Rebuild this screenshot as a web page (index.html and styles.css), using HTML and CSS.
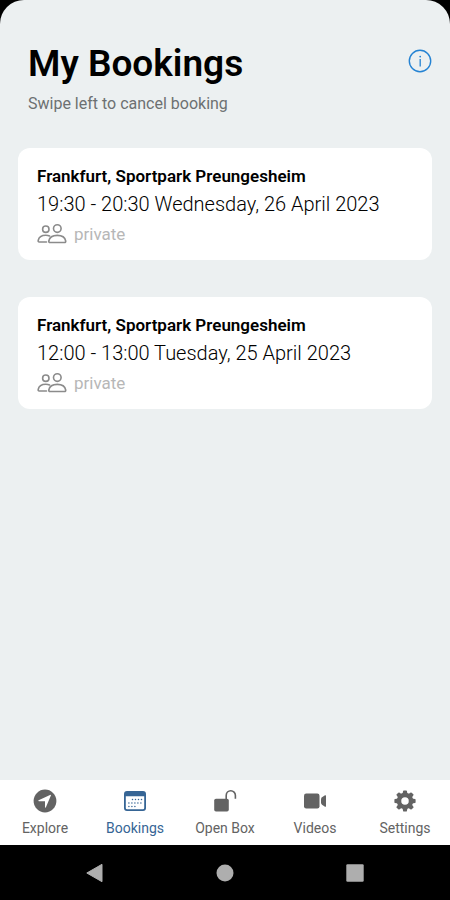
FILE: index.html
```html
<!DOCTYPE html>
<html lang="en">
<head>
<meta charset="utf-8">
<meta name="viewport" content="width=device-width, initial-scale=1">
<title>My Bookings</title>
<link rel="stylesheet" href="styles.css">
</head>
<body>
<svg class="sprite" aria-hidden="true">
  <symbol id="people" viewBox="0 0 30 20">
    <g fill="none" stroke="currentColor" stroke-width="1.6" stroke-linejoin="round" stroke-linecap="round">
      <circle cx="8.8" cy="5.2" r="3.2"/>
      <circle cx="20.3" cy="4.6" r="3.8"/>
      <path d="M9.500 18H2.200Q1 18 1.200 16.500C1.800 13.200 5 11.200 8.800 11.200Q11 11.200 12.600 12"/>
      <path d="M13.200 18.500Q11.500 18.500 11.800 17C12.500 13.300 16 11.400 20.300 11.400S28 13.300 28.700 17Q29 18.500 27.300 18.500Z"/>
    </g>
  </symbol>
</svg>
<div class="app">
  <main class="screen">
    <header class="header">
      <div>
        <h1 class="title">My Bookings</h1>
        <p class="hint">Swipe left to cancel booking</p>
      </div>
      <button class="info" type="button" aria-label="Information">
        <svg width="24" height="24" viewBox="0 0 24 24" fill="none" stroke="currentColor" stroke-width="1.4"><circle cx="12" cy="12" r="10.700"/><path d="M12.200 10v7.500" stroke-width="1.300"/><circle cx="12.200" cy="7.600" r=".9" fill="currentColor" stroke="none"/></svg>
      </button>
    </header>
    <ul class="bookings">
      <li class="card">
        <h2 class="place">Frankfurt, Sportpark Preungesheim</h2>
        <p class="time">19:30 - 20:30 Wednesday, 26 April 2023</p>
        <p class="type"><svg class="people"><use href="#people"/></svg>private</p>
      </li>
      <li class="card">
        <h2 class="place">Frankfurt, Sportpark Preungesheim</h2>
        <p class="time">12:00 - 13:00 Tuesday, 25 April 2023</p>
        <p class="type"><svg class="people"><use href="#people"/></svg>private</p>
      </li>
    </ul>
  </main>
  <nav class="tabs">
    <a class="tab" href="#explore">
      <svg class="icon" viewBox="0 0 24 24"><circle cx="12" cy="12" r="11.400" fill="currentColor"/><path d="M18 6.200 12.800 18.500Q12.300 19 12 18.200V12.300H5.800Q4.800 12 5.600 11.300L17 6Q18 5.500 18 6.200Z" fill="#fff"/></svg>
      Explore
    </a>
    <a class="tab active" href="#bookings" aria-current="page">
      <svg class="icon" viewBox="0 0 24 24"><path fill="currentColor" fill-rule="evenodd" d="M4 2h16a3 3 0 0 1 3 3v14a3 3 0 0 1-3 3H4a3 3 0 0 1-3-3V5a3 3 0 0 1 3-3ZM2.800 7.200V19a1.300 1.300 0 0 0 1.300 1.300h15.800a1.300 1.300 0 0 0 1.300-1.300V7.200Z"/><path d="M9.500 10.500h10M5.900 14h13M5.900 17.500h8" fill="none" stroke="currentColor" stroke-width="1.500" stroke-linecap="round" stroke-dasharray="0 3"/></svg>
      Bookings
    </a>
    <a class="tab" href="#open-box">
      <svg class="icon" viewBox="0 0 24 24"><rect x="1.200" y="9.800" width="14.600" height="12.700" rx="1.800" fill="currentColor"/><path d="M13.200 10V6.400a4.600 4.600 0 0 1 9.200 0v3.300" fill="none" stroke="currentColor" stroke-width="1.600"/></svg>
      Open Box
    </a>
    <a class="tab" href="#videos">
      <svg class="icon" viewBox="0 0 24 24"><rect x="1" y="4.500" width="15.500" height="15" rx="2.200" fill="currentColor"/><path d="M18 10.200Q18 9 19 8.200L22 6.300Q23 5.800 23 7v10q0 1.200-1 .7L19 15.800Q18 15 18 13.800Z" fill="currentColor"/></svg>
      Videos
    </a>
    <a class="tab" href="#settings">
      <svg class="icon" viewBox="0 0 24 24"><circle cx="12" cy="12" r="6" fill="none" stroke="currentColor" stroke-width="4.500"/><g fill="currentColor"><path id="tooth" d="M9.500 5 10.100 2Q10.200 1.400 10.800 1.400h2.400Q13.800 1.400 13.900 2L14.500 5Z"/><use href="#tooth" transform="rotate(45 12 12)"/><use href="#tooth" transform="rotate(90 12 12)"/><use href="#tooth" transform="rotate(135 12 12)"/><use href="#tooth" transform="rotate(180 12 12)"/><use href="#tooth" transform="rotate(225 12 12)"/><use href="#tooth" transform="rotate(270 12 12)"/><use href="#tooth" transform="rotate(315 12 12)"/></g></svg>
      Settings
    </a>
  </nav>
</div>
<div class="system">
  <button type="button" aria-label="Back"><svg width="20" height="20" viewBox="0 0 20 20"><path d="M1.800 10 17 1.300V18.700Z" fill="currentColor" stroke="currentColor" stroke-linejoin="round"/></svg></button>
  <button type="button" aria-label="Home"><svg width="20" height="20" viewBox="0 0 20 20"><circle cx="10" cy="10" r="8.500" fill="currentColor"/></svg></button>
  <button type="button" aria-label="Recent apps"><svg width="20" height="20" viewBox="0 0 20 20"><rect x="1.300" y="1.300" width="17.400" height="17.400" rx="1.200" fill="currentColor"/></svg></button>
</div>
</body>
</html>
```

FILE: styles.css
```css
* { box-sizing: border-box; }

body {
  margin: 0;
  min-height: 100vh;
  display: flex;
  flex-direction: column;
  background: #000;
  color: #000;
  font-family: Roboto, sans-serif;
}

h1, h2, p, ul { margin: 0; padding: 0; }
button { padding: 0; border: 0; background: none; }
svg { display: block; }
.sprite { position: absolute; width: 0; height: 0; }

.app {
  flex: 1;
  display: flex;
  flex-direction: column;
  overflow: hidden;
  border-radius: 24px 24px 0 0;
  background: #ecf0f1;
}

.screen { flex: 1; padding: 40px 18px 24px; }

.header {
  display: flex;
  justify-content: space-between;
  align-items: flex-start;
  padding-left: 10px;
}

.title { font-size: 37px; line-height: 48px; font-weight: 600; }
.hint { margin-top: 5px; font-size: 16px; line-height: 22px; color: #6d7072; }
.info { margin-top: 9px; color: #2583d3; }

.bookings {
  display: grid;
  gap: 37px;
  margin-top: 33px;
  list-style: none;
}

.card {
  padding: 16px 18px 14px 19px;
  border-radius: 12px;
  background: #fff;
}

.place { font-size: 17px; line-height: 24px; font-weight: 600; }
.time { margin-top: 2px; font-size: 20px; line-height: 28px; font-weight: 300; }

.type {
  display: flex;
  align-items: center;
  gap: 7px;
  margin-top: 4px;
  font-size: 17px;
  line-height: 24px;
  color: #b7b7b7;
}

.people { width: 30px; height: 20px; color: #8b8b8b; }

.tabs {
  display: grid;
  grid-template-columns: repeat(5, 1fr);
  height: 65px;
  padding-top: 9px;
  background: #fff;
}

.tab {
  display: flex;
  flex-direction: column;
  align-items: center;
  gap: 6px;
  color: #636363;
  font-size: 14px;
  line-height: 18px;
  text-decoration: none;
}

.active { color: #366595; }
.icon { width: 24px; height: 24px; }

.system {
  display: grid;
  grid-template-columns: repeat(3, 1fr);
  justify-items: center;
  align-items: center;
  height: 55px;
  padding: 0 30px;
  color: #aeaeae;
}

.system button { color: inherit; }
```
